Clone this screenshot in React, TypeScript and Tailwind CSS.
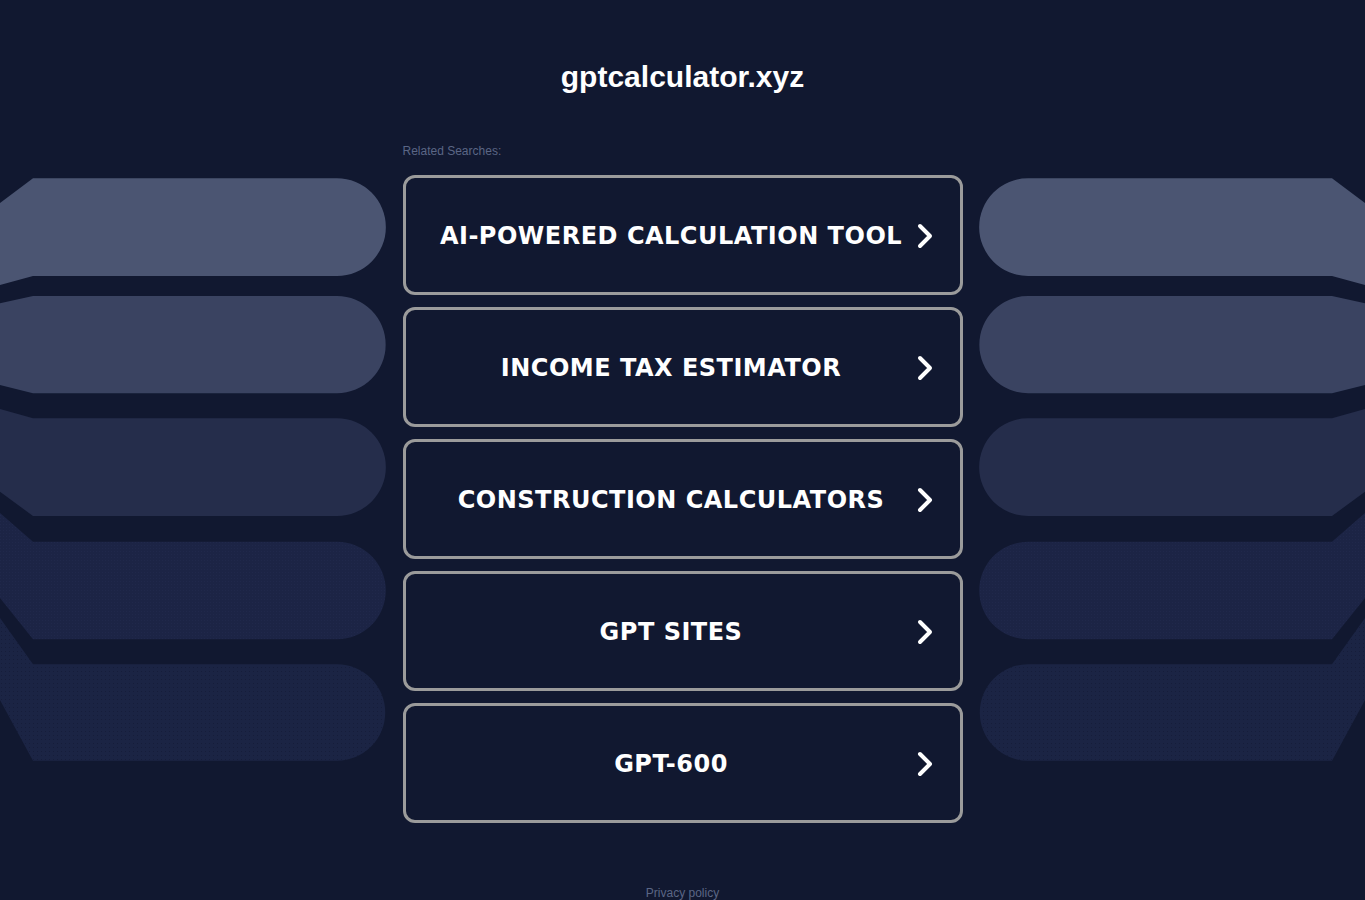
const links = [
  "AI-POWERED CALCULATION TOOL",
  "INCOME TAX ESTIMATOR",
  "CONSTRUCTION CALCULATORS",
  "GPT SITES",
  "GPT-600",
];

// decorative fan of bars, drawn for the left side; the right side is the mirror
const Fan = ({ flip }: { flip?: boolean }) => (
  <svg
    width="386"
    height="600"
    viewBox="0 0 386 600"
    className={flip ? "-scale-x-100 block" : "block"}
  >
    <defs>
      <pattern id={flip ? "dotsA-r" : "dotsA"} width="3" height="3" patternUnits="userSpaceOnUse">
        <rect width="3" height="3" fill="#1c2445" />
        <rect width="1" height="1" fill="#20284b" />
      </pattern>
      <pattern id={flip ? "dotsB-r" : "dotsB"} width="4" height="4" patternUnits="userSpaceOnUse">
        <rect width="4" height="4" fill="#1b2444" />
        <rect x="1" y="1" width="1" height="1" fill="#161d3a" />
      </pattern>
    </defs>
    <path d="M0 33 L33 8.3 L337 8.3 A48.85 48.85 0 0 1 337 106 L33 106 L0 115 Z" fill="#4b5572" />
    <path d="M0 133.3 L33 126 L337 126 A48.65 48.65 0 0 1 337 223.3 L33 223.3 L0 215 Z" fill="#3a4361" />
    <path d="M0 239 L33 248.3 L337 248.3 A48.85 48.85 0 0 1 337 346 L33 346 L0 321.7 Z" fill="#252d4b" />
    <path
      d="M0 343 L33 371.7 L337 371.7 A48.8 48.8 0 0 1 337 469.3 L33 469.3 L0 428 Z"
      fill={flip ? "url(#dotsA-r)" : "url(#dotsA)"}
    />
    <path
      d="M0 448 L33 494.3 L337 494.3 A48.2 48.2 0 0 1 337 590.7 L33 590.7 L0 530 Z"
      fill={flip ? "url(#dotsB-r)" : "url(#dotsB)"}
    />
  </svg>
);

const Chevron = () => (
  <svg width="16" height="26" viewBox="0 0 16 26" className="mr-[27px] shrink-0">
    <polyline
      points="3,3 13,13 3,23"
      fill="none"
      stroke="white"
      strokeWidth="4"
      strokeLinecap="round"
      strokeLinejoin="round"
    />
  </svg>
);

const App = () => {
  return (
    <div className="min-h-screen bg-[#111830] overflow-hidden font-['Liberation_Sans',Arial,sans-serif]">
      <header className="pt-[58px] text-center">
        <h1 className="text-[30px] leading-[38px] font-bold text-white">gptcalculator.xyz</h1>
      </header>

      <main className="mt-[47px] flex justify-between items-start">
        <div className="pt-[27px] w-[386px] shrink-0">
          <Fan />
        </div>

        <section className="w-[560px] shrink-0">
          <p className="text-[12px] leading-[16px] text-[#5b6685] mb-[16px]">Related Searches:</p>
          <div className="flex flex-col gap-[12px]">
            {links.map((label) => (
              <a
                key={label}
                href="#"
                className="h-[120px] flex items-center pl-[20px] pt-[2px] border-[3px] border-[#9b9b9b] rounded-[12px] text-white"
              >
                <span className="flex-1 text-center font-['DejaVu_Sans',Verdana,sans-serif] font-bold text-[24px] tracking-[0.5px]">
                  {label}
                </span>
                <Chevron />
              </a>
            ))}
          </div>
        </section>

        <div className="pt-[27px] w-[386px] shrink-0">
          <Fan flip />
        </div>
      </main>

      <footer className="mt-[57px] pb-4 text-center">
        <a href="#" className="text-[12px] leading-[16px] text-[#5b6685]">
          Privacy policy
        </a>
      </footer>
    </div>
  );
};

export default App;
